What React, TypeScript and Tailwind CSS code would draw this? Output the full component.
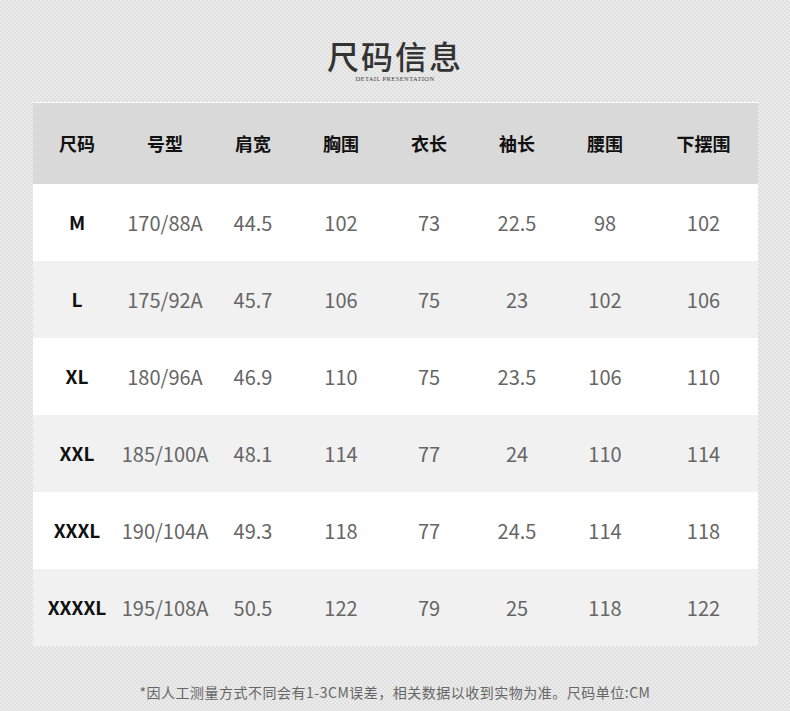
const headers = ["尺码", "号型", "肩宽", "胸围", "衣长", "袖长", "腰围", "下摆围"];

const rows = [
  ["M", "170/88A", "44.5", "102", "73", "22.5", "98", "102"],
  ["L", "175/92A", "45.7", "106", "75", "23", "102", "106"],
  ["XL", "180/96A", "46.9", "110", "75", "23.5", "106", "110"],
  ["XXL", "185/100A", "48.1", "114", "77", "24", "110", "114"],
  ["XXXL", "190/104A", "49.3", "118", "77", "24.5", "114", "118"],
  ["XXXXL", "195/108A", "50.5", "122", "79", "25", "118", "122"],
];

const cols = "grid grid-cols-[88px_88px_88px_88px_88px_88px_88px_1fr]";

export default function App() {
  return (
    <div className="h-[711px] w-[790px] overflow-hidden bg-[#e6e6e6] bg-[conic-gradient(#e0e0e0_25%,#ebebeb_0_50%,#e0e0e0_0_75%,#ebebeb_0)] bg-[length:4px_4px] font-['Noto_Sans_CJK_SC','Noto_Sans',sans-serif]">
      <div className="flex flex-col items-center pt-[38px]">
        <h1 className="text-[32px] leading-[34px] font-medium tracking-[2px] text-[#333333]">尺码信息</h1>
        <p className="mt-[3px] text-[6.5px] leading-[7px] tracking-[0.4px] text-[#444444] font-['Liberation_Serif',serif]">
          DETAIL PRESENTATION
        </p>
      </div>

      <div className="mx-[33px] mt-[20px] w-[725px] border-t border-white/80">
        <div className={`${cols} h-[81px] items-center bg-[#d9d9d9] text-[18px] font-bold text-[#111111]`}>
          {headers.map((h) => (
            <div key={h} className="text-center">
              {h}
            </div>
          ))}
        </div>
        {rows.map((r, i) => (
          <div
            key={r[0]}
            className={`${cols} h-[77px] items-center ${i % 2 === 0 ? "bg-white" : "bg-[#f1f1f1]"}`}
          >
            {r.map((c, j) => (
              <div
                key={j}
                className={`text-center ${j === 0 ? "text-[19px] font-bold text-[#111111]" : "text-[20px] text-[#666666]"}`}
              >
                {c}
              </div>
            ))}
          </div>
        ))}
      </div>

      <p className="mt-[36px] text-center text-[14px] tracking-[0.5px] text-[#666666]">
        *因人工测量方式不同会有1-3CM误差，相关数据以收到实物为准。尺码单位:CM
      </p>
    </div>
  );
}
